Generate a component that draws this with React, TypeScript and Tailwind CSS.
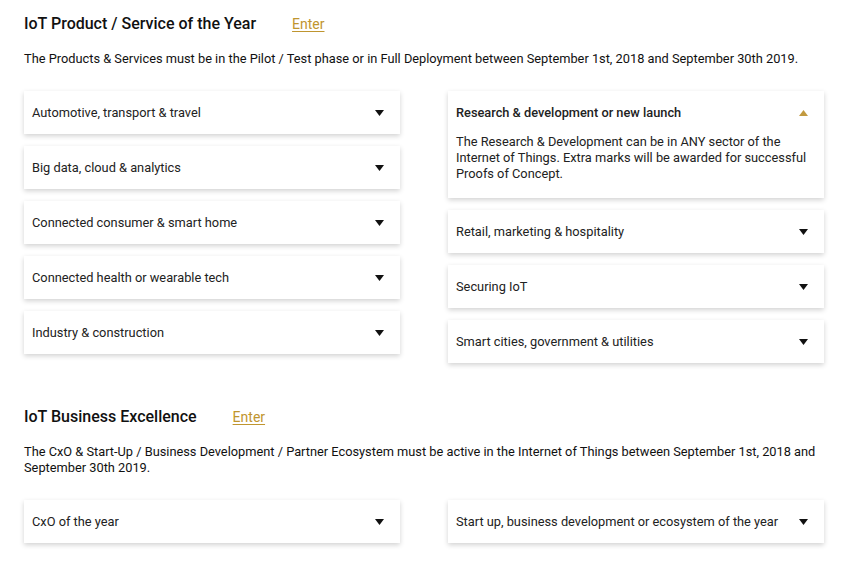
import React from 'react';

type Item = { title: string; body?: string; open?: boolean };

const section1Left: Item[] = [
  { title: 'Automotive, transport & travel' },
  { title: 'Big data, cloud & analytics' },
  { title: 'Connected consumer & smart home' },
  { title: 'Connected health or wearable tech' },
  { title: 'Industry & construction' },
];

const section1Right: Item[] = [
  {
    title: 'Research & development or new launch',
    body: 'The Research & Development can be in ANY sector of the Internet of Things. Extra marks will be awarded for successful Proofs of Concept.',
    open: true,
  },
  { title: 'Retail, marketing & hospitality' },
  { title: 'Securing IoT' },
  { title: 'Smart cities, government & utilities' },
];

function Caret({ open }: { open?: boolean }) {
  return (
    <svg width="9" height="6" viewBox="0 0 9 6" className="shrink-0">
      {open ? (
        <path d="M4.5 0L9 6H0z" fill="#c29a3f" />
      ) : (
        <path d="M0 0h9L4.5 6z" fill="#111" />
      )}
    </svg>
  );
}

function Card({ item }: { item: Item }) {
  return (
    <div className="bg-white shadow-[0_2px_5px_rgba(0,0,0,0.18)]">
      <div className="h-[43px] flex items-center justify-between pl-2 pr-[16px]">
        <span className={item.open ? 'font-medium text-[12.8px] text-[#222]' : 'text-[12.8px] text-[#222]'}>
          {item.title}
        </span>
        <Caret open={item.open} />
      </div>
      {item.open && item.body && (
        <p className="px-2 pb-[16px] text-[12.8px] leading-4 text-[#222]">{item.body}</p>
      )}
    </div>
  );
}

function Section({
  title,
  desc,
  left,
  right,
}: {
  title: string;
  desc: string;
  left: Item[];
  right: Item[];
}) {
  return (
    <section>
      <div className="flex items-center h-[28px]">
        <h2 className="text-[16px] font-medium text-[#111] mr-9">{title}</h2>
        <a href="#" className="text-[14px] text-[#bf952f] underline underline-offset-2">
          Enter
        </a>
      </div>
      <p className="mt-[13px] text-[12.8px] leading-4 text-[#111]">{desc}</p>
      <div className="mt-[24px] grid grid-cols-2 gap-x-12 items-start">
        <div className="flex flex-col gap-3">
          {left.map((it) => (
            <Card key={it.title} item={it} />
          ))}
        </div>
        <div className="flex flex-col gap-3">
          {right.map((it) => (
            <Card key={it.title} item={it} />
          ))}
        </div>
      </div>
    </section>
  );
}

export default function App() {
  return (
    <div className="w-[848px] h-[567px] overflow-hidden bg-white px-6 pt-[10px] font-['Roboto',sans-serif]">
      <Section
        title="IoT Product / Service of the Year"
        desc="The Products & Services must be in the Pilot / Test phase or in Full Deployment between September 1st, 2018 and September 30th 2019."
        left={section1Left}
        right={section1Right}
      />
      <div className="h-[40px]" />
      <Section
        title="IoT Business Excellence"
        desc="The CxO & Start-Up / Business Development / Partner Ecosystem must be active in the Internet of Things between September 1st, 2018 and September 30th 2019."
        left={[{ title: 'CxO of the year' }]}
        right={[{ title: 'Start up, business development or ecosystem of the year' }]}
      />
    </div>
  );
}
